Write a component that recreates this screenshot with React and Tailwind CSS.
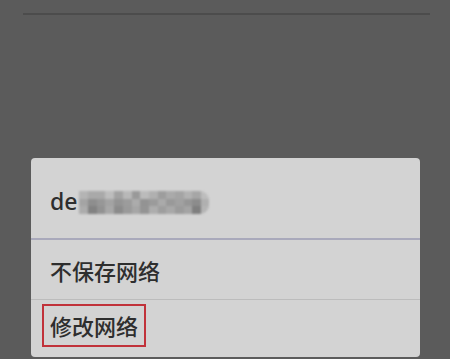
import React from 'react';

// mosaic shades for the blurred network name (3 rows x 15 cols)
const mosaic = [
  ['#b4b4b4', '#a9a9a9', '#a9a9a9', '#bdbdbd', '#a2a2a2', '#b8b8b8', '#999999', '#bbbbbb', '#b0b0b0', '#9d9d9d', '#aaaaaa', '#a4a4a4', '#b2b2b2', '#a6a6a6', '#bdbdbd'],
  ['#a4a4a4', '#8e8e8e', '#979797', '#a3a3a3', '#949494', '#9c9c9c', '#acacac', '#939393', '#9b9b9b', '#aaaaaa', '#999999', '#a1a1a1', '#969696', '#8c8c8c', '#b0b0b0'],
  ['#acacac', '#828282', '#929292', '#a7a7a7', '#8b8b8b', '#9a9a9a', '#a6a6a6', '#949494', '#adadad', '#9e9e9e', '#a8a8a8', '#9b9b9b', '#a4a4a4', '#7f7f7f', '#b4b4b4'],
];

const Mosaic = () => (
  <div className="ml-[2px] mt-[3px] w-[130px] overflow-hidden rounded-r-[9px] blur-[0.8px]">
    {mosaic.map((row, r) => (
      <div key={r} className="flex">
        {row.map((c, i) => (
          <div key={i} className="h-[7.5px] flex-1" style={{ backgroundColor: c }} />
        ))}
      </div>
    ))}
  </div>
);

export default function App() {
  return (
    <div
      className="w-[450px] h-[359px] overflow-hidden bg-[#5b5b5b] flex flex-col"
      style={{ fontFamily: '"Noto Sans", "Noto Sans CJK SC", sans-serif' }}
    >
      {/* faint rule of the screen behind the dialog */}
      <div className="mt-[13px] ml-[23px] mr-[20px] h-[2px] bg-[#4c4c4c]" />

      {/* dialog */}
      <div className="mt-[143px] ml-[31px] w-[389px] h-[199px] rounded-[4px] bg-[#d3d3d3] flex flex-col text-[22px] text-[#2e2e2e]">
        <div className="h-[80px] flex items-center pl-[19px] pt-[6px]">
          <span className="leading-none font-medium text-[23px]">de</span>
          <Mosaic />
        </div>
        <div className="h-[2px] bg-[#a9a9bb]" />
        <div className="h-[59px] flex items-center pl-[19px] pt-[2px] leading-none font-medium">
          不保存网络
        </div>
        <div className="h-px bg-[#bcbcbc]" />
        <div className="flex-1 flex items-start pl-[11px] pt-[4px]">
          <div className="border-2 border-[#c1323a] h-[43px] px-[6px] flex items-center leading-none font-medium">
            修改网络
          </div>
        </div>
      </div>
    </div>
  );
}
